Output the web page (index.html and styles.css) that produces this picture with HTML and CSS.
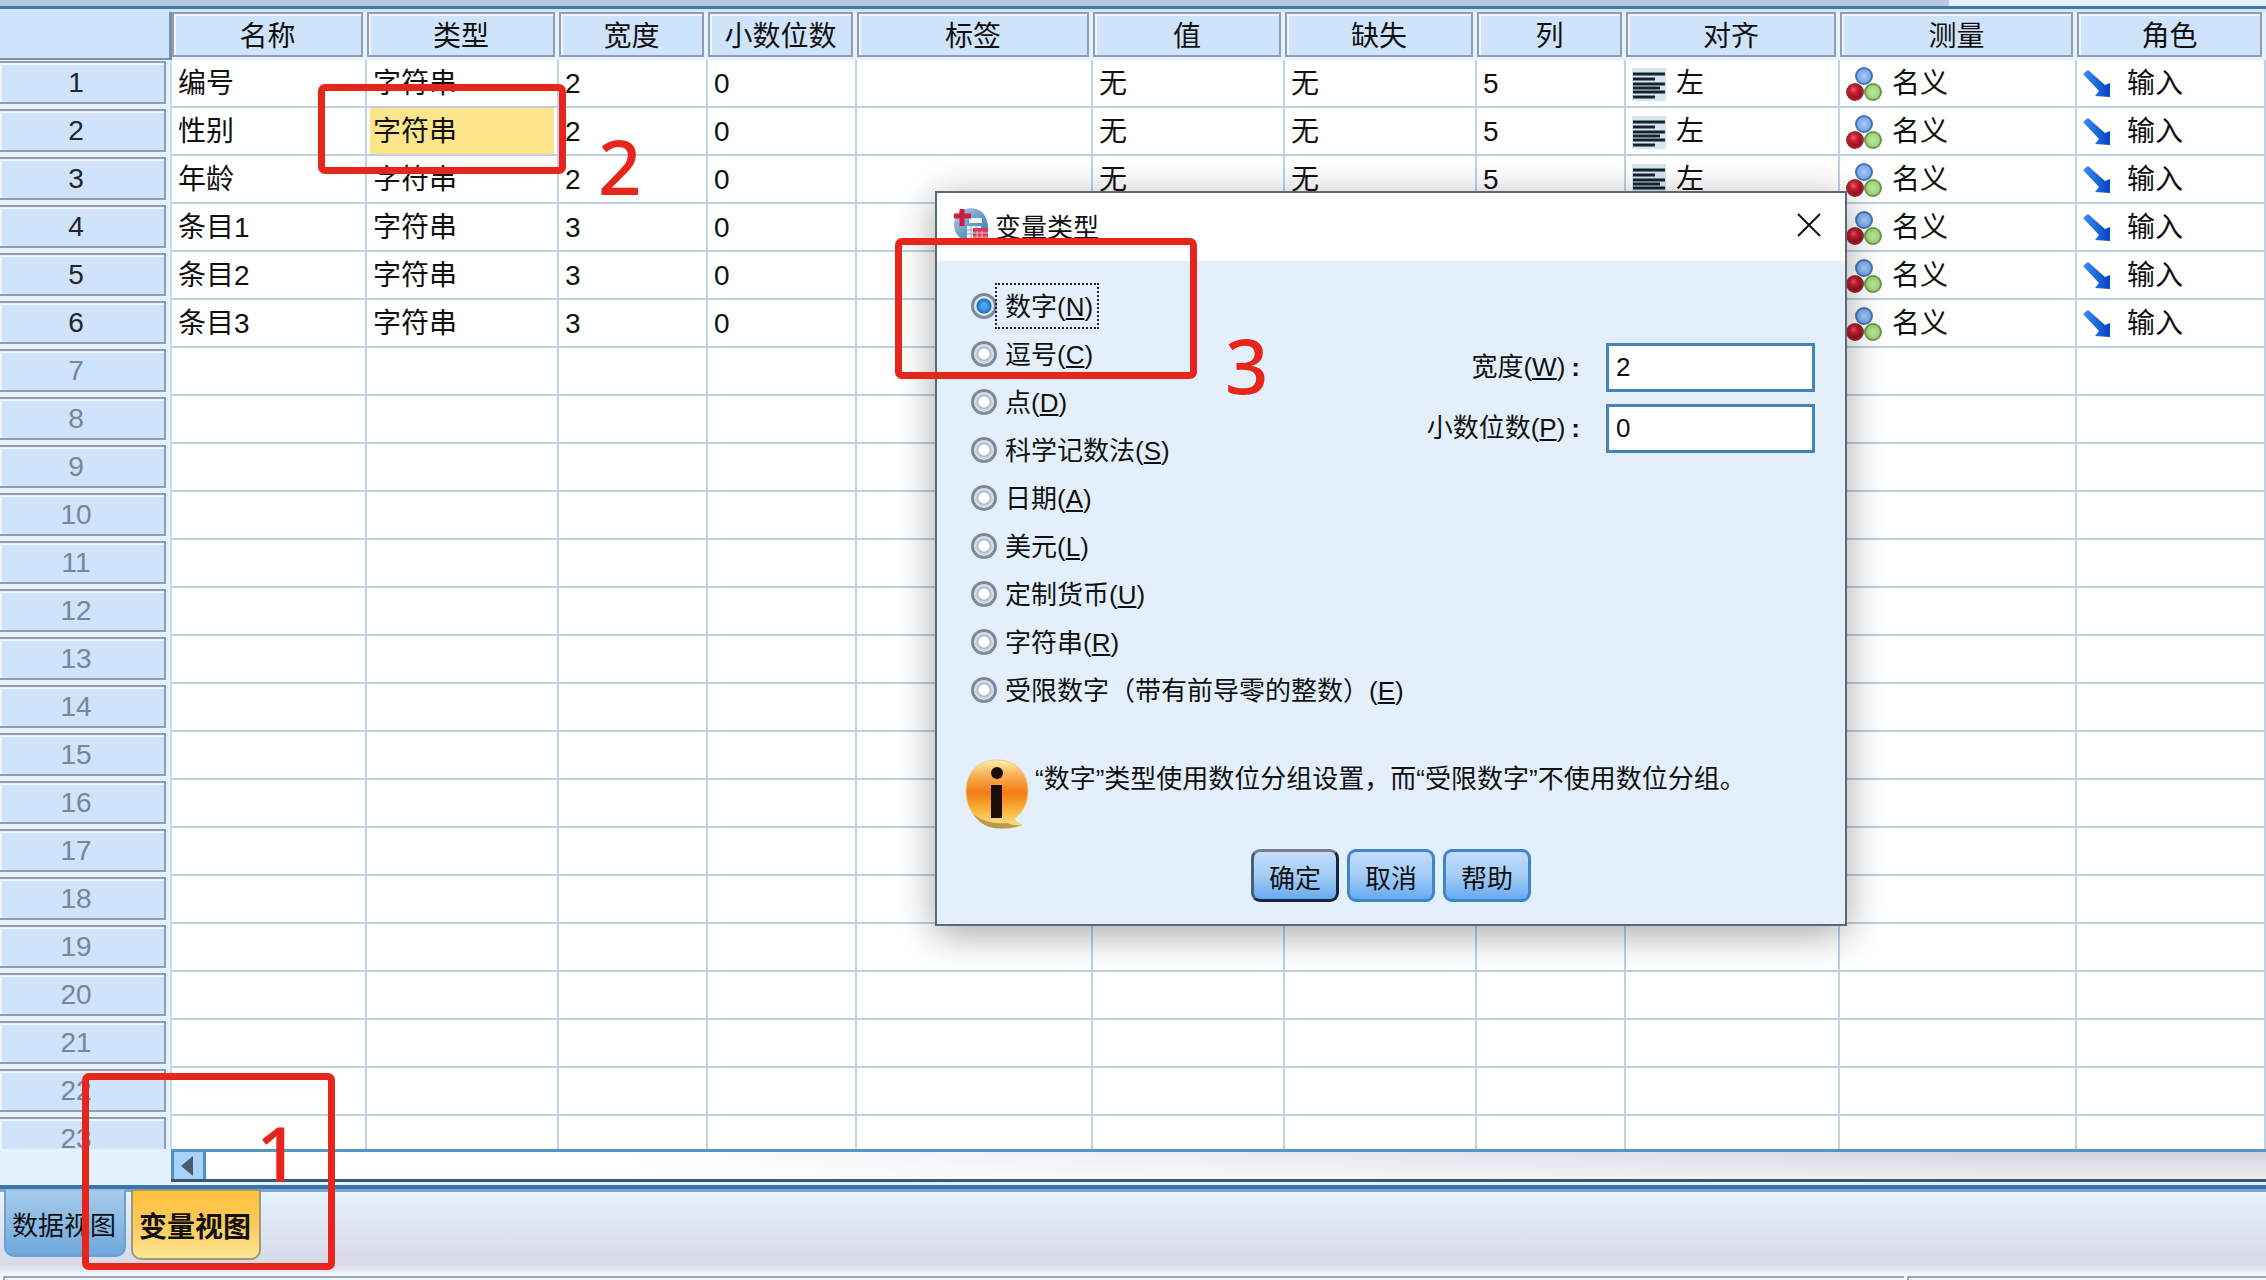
FILE: index.html
```html
<!DOCTYPE html>
<html lang="zh-CN">
<head>
    <meta charset="UTF-8">
    <meta name="viewport" content="width=device-width, initial-scale=1.0">
    <title>变量视图</title>
    <link rel="stylesheet" href="styles.css">
</head>
<body>
    <svg class="defs" aria-hidden="true">
        <defs>
            <radialGradient id="blue"><stop offset="0" stop-color="#a5cdf8"/><stop offset="1" stop-color="#6fa3e2"/></radialGradient>
            <radialGradient id="red" cx="0.4" cy="0.35"><stop offset="0" stop-color="#f0606a"/><stop offset="0.5" stop-color="#c81f30"/><stop offset="1" stop-color="#a01020"/></radialGradient>
            <radialGradient id="green"><stop offset="0" stop-color="#c0eaa4"/><stop offset="1" stop-color="#97ce74"/></radialGradient>
            <linearGradient id="arrow" x2="1"><stop offset="0" stop-color="#3d8af5"/><stop offset="1" stop-color="#0646c0"/></linearGradient>
            <linearGradient id="orange" x2="0" y2="1"><stop offset="0" stop-color="#fdf3b0"/><stop offset="0.2" stop-color="#f8b45c"/><stop offset="0.48" stop-color="#f47c14"/><stop offset="0.75" stop-color="#fbb63c"/><stop offset="1" stop-color="#fbe896"/></linearGradient>
            <linearGradient id="globe" x2="1" y2="1"><stop offset="0" stop-color="#b9cfe6"/><stop offset="0.6" stop-color="#5d93c4"/><stop offset="1" stop-color="#4a7fb8"/></linearGradient>
        </defs>
        <symbol id="icon-align" viewBox="0 0 34 33">
            <rect width="34" height="33" fill="#d5e6ef"/>
            <path d="M1 6h32M1 11h22M1 16h32M1 20h27M1 24h32M1 29h22" stroke="#16232f" stroke-width="3"/>
        </symbol>
        <symbol id="icon-nominal" viewBox="0 0 36 34">
            <circle cx="18" cy="9" r="8" fill="url(#blue)" stroke="#4676b4" stroke-width="2"/>
            <circle cx="9" cy="25" r="8" fill="url(#red)" stroke="#9c2a36" stroke-width="2"/>
            <circle cx="27" cy="25" r="8" fill="url(#green)" stroke="#6c9a52" stroke-width="2"/>
        </symbol>
        <symbol id="icon-input" viewBox="0 0 28 28">
            <path d="M0 4 5 0 22 15 27 13V27L12 26 16 21Z" fill="url(#arrow)"/>
        </symbol>
    </svg>

    <div class="top-strip"><div class="top-bar"></div></div>

    <main class="grid">
        <table class="variables">
            <colgroup>
                <col class="col-number"><col class="col-name"><col class="col-medium"><col class="col-narrow">
                <col class="col-narrow"><col class="col-label"><col class="col-medium"><col class="col-medium">
                <col class="col-narrow"><col class="col-align"><col class="col-measure"><col>
            </colgroup>
            <thead>
                <tr>
                    <th class="corner"></th>
                    <th><div class="cap">名称</div></th>
                    <th><div class="cap">类型</div></th>
                    <th><div class="cap">宽度</div></th>
                    <th><div class="cap">小数位数</div></th>
                    <th><div class="cap">标签</div></th>
                    <th><div class="cap">值</div></th>
                    <th><div class="cap">缺失</div></th>
                    <th><div class="cap">列</div></th>
                    <th><div class="cap">对齐</div></th>
                    <th><div class="cap">测量</div></th>
                    <th><div class="cap">角色</div></th>
                </tr>
            </thead>
            <tbody id="rows"></tbody>
        </table>
    </main>

    <div class="scroll-row">
        <div class="scrollbar">
            <button class="scroll-left" aria-label="向左滚动">
                <svg width="12" height="20" viewBox="0 0 12 20"><path d="M12 0V20L0 10Z" fill="#4b5a6c"/></svg>
            </button>
        </div>
    </div>

    <nav class="tabs">
        <button class="tab">数据视图</button>
        <button class="tab active">变量视图</button>
    </nav>
    <footer class="status"><div class="status-main"></div><div class="status-side"></div></footer>

    <section class="dialog" role="dialog" aria-labelledby="dialog-title">
        <header class="title-bar">
            <svg width="36" height="34" viewBox="0 0 36 34">
                <path d="M5 5Q18-4 29 4Q36 11 35 24V32H10Q0 26 1 14Z" fill="url(#globe)"/>
                <path d="M16 10h13v5H16zM14 18h14v13H14z" fill="#eaf2fa"/>
                <path d="M14 22h14M14 26h14M18 18v13M23 18v13" stroke="#8fb0d4"/>
                <path d="M9 1v17M1 8h17" stroke="#cc1c40" stroke-width="5"/>
                <path d="M20 20h15v13H20z" fill="#d0405c"/>
                <path d="M20 25h15M20 29h15M24 23v10M29 23v10" stroke="#f3b8c4"/>
            </svg>
            <h1 id="dialog-title">变量类型</h1>
            <button class="close" aria-label="关闭">
                <svg width="24" height="24" viewBox="0 0 24 24"><path d="M1 1 23 23M23 1 1 23" stroke="#111" stroke-width="2"/></svg>
            </button>
        </header>
        <div class="dialog-body">
            <div class="settings">
                <div class="types">
                    <label><input type="radio" name="type" checked><span class="focused">数字(<u>N</u>)</span></label>
                    <label><input type="radio" name="type"><span>逗号(<u>C</u>)</span></label>
                    <label><input type="radio" name="type"><span>点(<u>D</u>)</span></label>
                    <label><input type="radio" name="type"><span>科学记数法(<u>S</u>)</span></label>
                    <label><input type="radio" name="type"><span>日期(<u>A</u>)</span></label>
                    <label><input type="radio" name="type"><span>美元(<u>L</u>)</span></label>
                    <label><input type="radio" name="type"><span>定制货币(<u>U</u>)</span></label>
                    <label><input type="radio" name="type"><span>字符串(<u>R</u>)</span></label>
                    <label><input type="radio" name="type"><span>受限数字（带有前导零的整数）(<u>E</u>)</span></label>
                </div>
                <div class="sizes">
                    <label for="width">宽度(<u>W</u>)<b>:</b></label>
                    <input type="text" id="width" value="2">
                    <label for="decimals">小数位数(<u>P</u>)<b>:</b></label>
                    <input type="text" id="decimals" value="0">
                </div>
            </div>
            <div class="note">
                <svg width="64" height="70" viewBox="0 0 64 70">
                    <path d="M32 1C50 1 63 13 63 32C63 44 58 53 49 60Q52 65 57 66Q46 71 28 68C10 64 1 48 1 32C1 13 14 1 32 1Z" fill="url(#orange)" stroke="#eecb78"/>
                    <path d="M8 55Q22 66 42 64Q49 67 57 66Q40 72 24 68Q14 64 8 55Z" fill="#b99a4c"/>
                    <circle cx="32" cy="14" r="6" fill="#1a0d04"/>
                    <path d="M26 26h11v33H26z" fill="#1a0d04"/>
                </svg>
                <p>“数字”类型使用数位分组设置，而“受限数字”不使用数位分组。</p>
            </div>
            <div class="actions">
                <button class="default">确定</button>
                <button>取消</button>
                <button>帮助</button>
            </div>
        </div>
    </section>

    <div class="mark mark-tab"></div>
    <div class="mark mark-type"></div>
    <div class="mark mark-numeric"></div>
    <span class="step step-tab">1</span>
    <span class="step step-type">2</span>
    <span class="step step-numeric">3</span>

    <script>
        const variables = [
            ['编号', '2'],
            ['性别', '2'],
            ['年龄', '2'],
            ['条目1', '3'],
            ['条目2', '3'],
            ['条目3', '3'],
        ];
        const totalRows = 23;
        const selectedRow = 1;

        function iconCell(icon, width, height, text) {
            return `<td><div class="with-icon"><svg class="${icon}" width="${width}" height="${height}"><use href="#${icon}"/></svg>${text}</div></td>`;
        }

        function variableCells(index) {
            const [name, width] = variables[index];
            const selected = index === selectedRow ? ' class="selected"' : '';

            return `<td>${name}</td><td${selected}>字符串</td><td>${width}</td><td>0</td><td></td>` +
                '<td>无</td><td>无</td><td>5</td>' +
                iconCell('icon-align', 34, 33, '左') +
                iconCell('icon-nominal', 36, 34, '名义') +
                iconCell('icon-input', 28, 28, '输入');
        }

        let html = '';
        for (let i = 0; i < totalRows; i++) {
            const used = i < variables.length;
            const cells = used ? variableCells(i) : '<td></td>'.repeat(11);
            html += `<tr class="${used ? 'used' : ''}"><th scope="row"><div class="cap">${i + 1}</div></th>${cells}</tr>`;
        }
        document.getElementById('rows').innerHTML = html;
    </script>
</body>
</html>
```

FILE: styles.css
```css
* {
    box-sizing: border-box;
}

body {
    margin: 0;
    height: 100vh;
    display: flex;
    flex-direction: column;
    position: relative;
    overflow: hidden;
    background-color: #e3f3ff;
    color: #111;
    font-family: "Liberation Sans", "Noto Sans CJK SC", sans-serif;
    font-size: 28px;
}

button,
input {
    font: inherit;
    color: inherit;
    margin: 0;
}

svg {
    flex: none;
    display: block;
}

.defs {
    position: absolute;
    width: 0;
    height: 0;
}

/* top edge */
.top-strip {
    height: 12px;
    flex: none;
    background-color: #e2f2fd;
    border-bottom: 3px solid #cfe6fa;
    box-shadow: inset 0 -3px #447aa6;
}

.top-bar {
    width: 86%;
    height: 6px;
    background-color: #b7c9e1;
}

/* variable grid */
.grid {
    flex: 1;
    min-height: 0;
    overflow: hidden;
}

.variables {
    width: 100%;
    table-layout: fixed;
    border-collapse: separate;
    border-spacing: 0;
    line-height: 40px;
}

.col-number { width: 172px; }
.col-name { width: 195px; }
.col-medium { width: 192px; }
.col-narrow { width: 149px; }
.col-label { width: 236px; }
.col-align { width: 214px; }
.col-measure { width: 237px; }

.variables th {
    padding: 0;
    height: 48px;
    font-weight: normal;
    vertical-align: top;
    background-color: #e3f3ff;
}

.variables thead th {
    padding-right: 4px;
}

.cap {
    height: 45px;
    border: 2px solid #929db3;
    background-color: #cfe4fb;
    box-shadow: inset 2px 2px #edf5fd;
    text-align: center;
    line-height: 46px;
    white-space: nowrap;
}

.variables thead .corner {
    border-right: 3px solid #7b8da8;
    border-bottom: 2px solid #7b8da8;
    background-color: #cfe4fb;
}

.variables tbody th {
    padding-right: 4px;
    padding-top: 1px;
    border-right: 2px solid #c4dcf0;
}

.variables tbody .cap {
    height: 43px;
    border-left: 0;
    padding-right: 12px;
    color: #75879b;
    line-height: 40px;
}

.variables .used .cap {
    color: #20262e;
}

.variables td {
    height: 48px;
    padding: 2px 0 0 6px;
    border-right: 2px solid #bdd3e6;
    border-bottom: 2px solid #bdd0df;
    background-color: #fff;
    white-space: nowrap;
}

.variables .selected {
    background-color: #fce58b;
    box-shadow: inset 3px 0 #fff, inset -3px 0 #fff;
}

.with-icon {
    display: flex;
    align-items: center;
    gap: 10px;
}

.icon-input {
    margin-right: 6px;
}

/* scrollbar */
.scroll-row {
    height: 36px;
    flex: none;
    padding-left: 171px;
}

.scrollbar {
    height: 33px;
    border-top: 3px solid #5b93c2;
    border-bottom: 3px solid #3a5778;
    background: linear-gradient(to right, #fff 20%, rgba(255, 255, 255, 0) 90%), linear-gradient(#d2d4e2, #ededee);
}

.scroll-left {
    width: 35px;
    height: 100%;
    padding: 0 7px;
    border: 2px solid #4f8ecb;
    border-width: 0 3px;
    background-color: #a9d2fb;
}

/* view tabs */
.tabs {
    height: 88px;
    flex: none;
    display: flex;
    align-items: flex-start;
    gap: 5px;
    padding-left: 4px;
    border-top: 4px solid #3b72b0;
    background: linear-gradient(#7fa6d2 3px, #e6f5fd 3px, #e2ecf9 20%, #dde4ef 50%, #d9d9e7 90%, #eaf0f8);
}

.tab {
    height: 68px;
    padding: 0 8px 0 6px;
    border: 2px solid #6f9fcf;
    border-top-color: #9dbddc;
    border-radius: 0 0 10px 10px;
    background: linear-gradient(#a6cbee, #6fa8dd);
    font-size: 26px;
    white-space: nowrap;
}

.tab.active {
    height: 71px;
    border-color: #9d9878;
    background: linear-gradient(#ffc23c, #fdc95a 50%, #fde596);
    font-size: 28px;
    font-weight: bold;
}

.status {
    height: 7px;
    flex: none;
    display: flex;
    gap: 3px;
    padding: 3px 0 0 3px;
    background-color: #f2f8fe;
}

.status-main {
    width: 84%;
    border: 2px solid #9aa6b4;
    border-width: 2px 0 0 2px;
}

.status-side {
    flex: 1;
    border: 2px solid #9aa6b4;
    border-width: 2px 0 0 2px;
}

/* variable type dialog */
.dialog {
    position: absolute;
    left: 935px;
    top: 191px;
    width: 912px;
    border: 2px solid #5c6874;
    background-color: #e3f0fc;
    box-shadow: 0 8px 36px rgba(0, 0, 0, 0.35);
    font-size: 26px;
}

.title-bar {
    height: 68px;
    display: flex;
    align-items: center;
    gap: 6px;
    padding: 0 24px 4px 16px;
    background-color: #fff;
}

.title-bar h1 {
    flex: 1;
    margin: 0;
    font-size: 26px;
    font-weight: normal;
}

.close {
    padding: 0;
    border: 0;
    background: none;
}

.dialog-body {
    padding: 21px 28px 22px;
}

.settings {
    display: flex;
    justify-content: space-between;
}

.types label {
    height: 48px;
    display: flex;
    align-items: center;
}

.types input {
    appearance: none;
    width: 26px;
    height: 26px;
    margin-left: 6px;
    border: 3px solid #7c8b99;
    border-radius: 50%;
    background: radial-gradient(circle, #fff 5px, #aab7c3 6px, #c9d5df 8px, #e6eef5 10px);
}

.types input:checked {
    background: radial-gradient(circle, #4aa3ee 3px, #1d6cc0 7px, #dce9f5 8px);
}

.types span {
    padding: 2px 4px 0 8px;
    line-height: 40px;
}

.types .focused {
    outline: 2px dotted #222;
}

.sizes {
    display: grid;
    grid-template-columns: auto 209px;
    align-content: start;
    align-items: center;
    gap: 12px 26px;
    padding: 61px 2px 0 0;
}

.sizes label {
    padding-bottom: 6px;
    text-align: right;
}

.sizes b {
    padding-left: 6px;
}

.sizes input {
    width: 100%;
    height: 49px;
    padding: 0 7px;
    border: 3px solid #4583bd;
    background-color: #fff;
}

.note {
    display: flex;
    gap: 6px;
    margin-top: 45px;
}

.note p {
    margin: 0;
    line-height: 40px;
}

.actions {
    display: flex;
    justify-content: center;
    gap: 8px;
    margin-top: 20px;
}

.actions button {
    width: 88px;
    height: 53px;
    padding: 2px 0 0;
    border: 3px solid #3f86cc;
    border-radius: 9px;
    background: linear-gradient(#c4ddfb, #a4cdf8 50%, #66aaf0);
}

.actions .default {
    border-color: #76808e #142642 #142642 #4c5f7a;
}

/* numbered steps drawn over the window */
.mark {
    position: absolute;
    border: 7px solid #e8251b;
    border-radius: 7px;
    pointer-events: none;
}

.mark-tab {
    left: 82px;
    top: 1073px;
    width: 253px;
    height: 197px;
}

.mark-type {
    left: 318px;
    top: 84px;
    width: 248px;
    height: 90px;
}

.mark-numeric {
    left: 895px;
    top: 238px;
    width: 302px;
    height: 141px;
}

.step {
    position: absolute;
    color: #e8251b;
    font-family: "Noto Sans", "Open Sans", sans-serif;
    font-size: 76px;
    font-weight: 500;
    line-height: 76px;
}

.step-tab {
    left: 256px;
    top: 1115px;
}

.step-type {
    left: 598px;
    top: 128px;
}

.step-numeric {
    left: 1225px;
    top: 327px;
}
```
